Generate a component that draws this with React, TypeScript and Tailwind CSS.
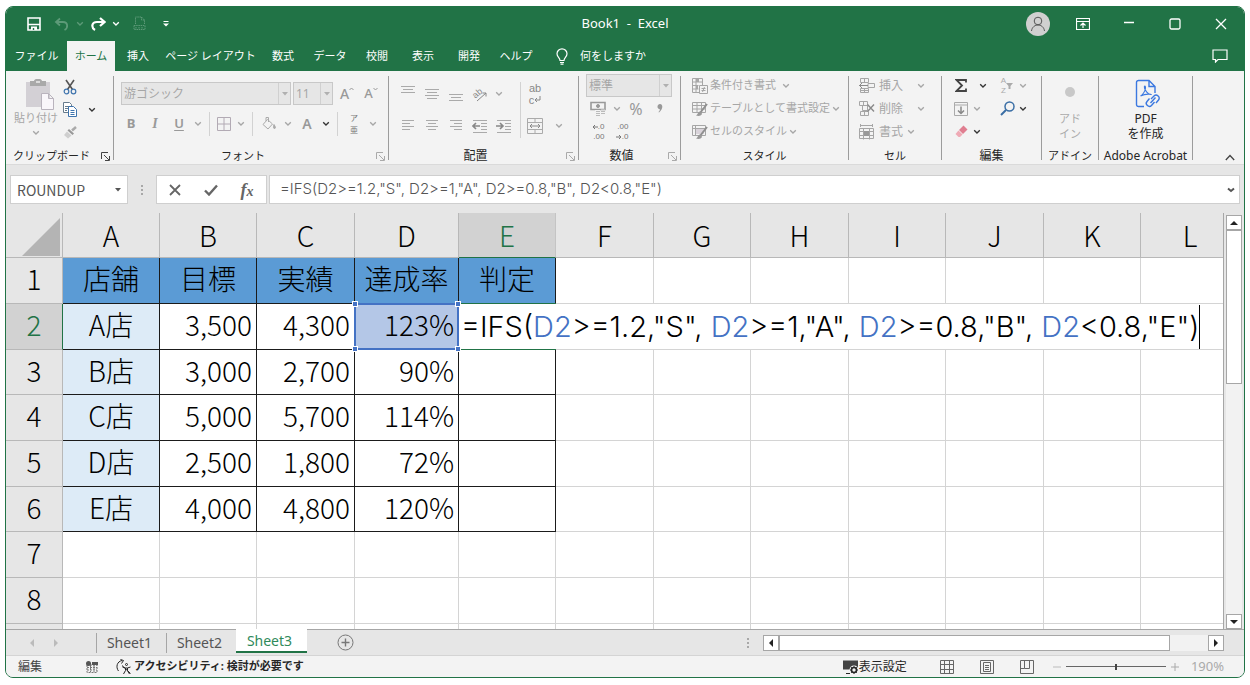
import type { ReactNode } from 'react';
import clsx from 'clsx';

const tabs = [
  { label: 'ファイル', width: 'w-[61px]' },
  { label: 'ホーム', width: 'w-12', active: true },
  { label: '挿入', width: 'w-[46px]' },
  { label: 'ページ レイアウト', width: 'w-[99px]' },
  { label: '数式', width: 'w-[46px]' },
  { label: 'データ', width: 'w-12' },
  { label: '校閲', width: 'w-[46px]' },
  { label: '表示', width: 'w-[46px]' },
  { label: '開発', width: 'w-[46px]' },
  { label: 'ヘルプ', width: 'w-12' },
];

const columns = [
  { name: 'A', width: 'w-[97px]' },
  { name: 'B', width: 'w-[97px]' },
  { name: 'C', width: 'w-[98px]' },
  { name: 'D', width: 'w-[104px]' },
  { name: 'E', width: 'w-[97px]' },
  { name: 'F', width: 'w-[98px]' },
  { name: 'G', width: 'w-[97px]' },
  { name: 'H', width: 'w-[98px]' },
  { name: 'I', width: 'w-[97px]' },
  { name: 'J', width: 'w-[98px]' },
  { name: 'K', width: 'w-[97px]' },
  { name: 'L', width: '' },
];

const headings = ['店舗', '目標', '実績', '達成率', '判定'];

const stores = [
  ['A店', '3,500', '4,300', '123%'],
  ['B店', '3,000', '2,700', '90%'],
  ['C店', '5,000', '5,700', '114%'],
  ['D店', '2,500', '1,800', '72%'],
  ['E店', '4,000', '4,800', '120%'],
];

const formula = '=IFS(D2>=1.2,"S", D2>=1,"A", D2>=0.8,"B", D2<0.8,"E")';

function Icon({
  w = 16,
  h = 16,
  className,
  children,
}: {
  w?: number;
  h?: number;
  className?: string;
  children: ReactNode;
}) {
  return (
    <svg
      width={w}
      height={h}
      viewBox={`0 0 ${w} ${h}`}
      fill="none"
      stroke="currentColor"
      className={clsx('shrink-0', className)}
      aria-hidden="true"
    >
      {children}
    </svg>
  );
}

function Chevron({ className = 'text-[#a6a6a6]' }: { className?: string }) {
  return (
    <Icon w={8} h={6} className={className}>
      <path d="M1.2 1.2 4 4l2.8-2.8" strokeWidth="1.3" />
    </Icon>
  );
}

function Triangle({ dir, className }: { dir: 'up' | 'down' | 'left' | 'right'; className?: string }) {
  const paths = {
    up: 'M0 6 4 2l4 4z',
    down: 'M0 2h8L4 6z',
    left: 'M6 0 2 4l4 4z',
    right: 'M2 0l4 4-4 4z',
  };
  return (
    <Icon w={8} h={8} className={className}>
      <path d={paths[dir]} fill="currentColor" stroke="none" />
    </Icon>
  );
}

function Tool({ label, className, children }: { label: string; className?: string; children: ReactNode }) {
  return (
    <button type="button" aria-label={label} className={clsx('flex shrink-0 items-center justify-center', className)}>
      {children}
    </button>
  );
}

function Drop({ label, dark, className = 'w-3.5' }: { label: string; dark?: boolean; className?: string }) {
  return (
    <Tool label={label} className={className}>
      <Chevron className={dark ? 'text-[#333]' : 'text-[#a6a6a6]'} />
    </Tool>
  );
}

function Rule() {
  return <span className="mx-1 h-6 w-px shrink-0 bg-[#d2d2d2]" />;
}

function Group({
  title,
  titleSize = 'text-[11px]',
  width,
  launcher,
  children,
}: {
  title: string;
  titleSize?: string;
  width: string;
  launcher?: 'dark' | 'light';
  children: ReactNode;
}) {
  return (
    <>
      <section className={clsx('flex shrink-0 flex-col', width)}>
        <div className="h-[77px]">{children}</div>
        <div className="flex h-4 items-center text-[#262626]">
          <span className={clsx('flex-1 text-center leading-4 whitespace-nowrap', titleSize)}>{title}</span>
          {launcher && (
            <Tool label={`${title}の設定`} className="w-4">
              <Icon w={9} h={9} className={launcher === 'dark' ? 'text-[#444]' : 'text-[#aaa]'}>
                <path d="M.5 7V.5H7M3 3l5 5M8.500 4v4.500H4" />
              </Icon>
            </Tool>
          )}
        </div>
      </section>
      <span className="mt-[5px] mb-1 w-px shrink-0 bg-[#9c9c9c]" />
    </>
  );
}

function Lines({ rows }: { rows: [number, number][] }) {
  return (
    <Icon>
      {rows.map(([x, width], i) => (
        <path key={i} d={`M${x} ${2.5 + i * 3}h${width}`} />
      ))}
    </Icon>
  );
}

function Combo({ label, value, className }: { label: string; value: string; className: string }) {
  return (
    <div className={clsx('flex h-[23px] shrink-0 border border-[#c8c8c8] bg-[#e6e6e6]', className)}>
      <select
        aria-label={label}
        disabled
        className="min-w-0 flex-1 appearance-none pl-0.5 text-xs text-[#a6a6a6] opacity-100"
      >
        <option>{value}</option>
      </select>
      <span className="flex w-3 items-center justify-center border-l border-[#d0d0d0] text-[#b0b0b0]">
        <Icon w={6} h={4}>
          <path d="M0 0h6L3 3.500z" fill="currentColor" stroke="none" />
        </Icon>
      </span>
    </div>
  );
}

function TitleBar() {
  return (
    <div className="flex h-[35px] items-center">
      <div className="flex flex-1 items-center">
        <Tool label="上書き保存" className="ml-4 w-6">
          <Icon w={14} h={14}>
            <path d="M1 1h12v12H1z" strokeWidth="1.6" />
            <path d="M1 7.500h12" strokeWidth="1.6" />
            <path d="M4 9.500h6V13H4z" fill="currentColor" stroke="none" />
            <path d="M6.500 11v2" stroke="#217346" strokeWidth="1.4" />
          </Icon>
        </Tool>
        <Tool label="元に戻す" className="ml-1 w-6 text-[#5d9a78]">
          <Icon w={16} h={14}>
            <path d="M6 1.500 2 5l4 3.500M2.500 5H9c5 0 5.500 6 1.500 8" strokeWidth="1.8" />
          </Icon>
        </Tool>
        <Tool label="元に戻す履歴" className="w-3 text-[#5d9a78]">
          <Chevron className="" />
        </Tool>
        <Tool label="やり直し" className="w-6">
          <Icon w={16} h={14}>
            <path d="m10 1 4.500 4L10 9M14 5H7C1.500 5 1 10.500 5 13" strokeWidth="2.2" />
          </Icon>
        </Tool>
        <Tool label="やり直し履歴" className="w-3">
          <Chevron className="" />
        </Tool>
        <Tool label="PDF" className="ml-1 w-7 text-[#5d9a78]">
          <Icon w={14} h={16}>
            <path d="M2.500 8V1h6l3 3v4M8.500 1v3h3M1 9.500h11v4H1zM3 11v1.500M6 11v1.500M9 11v1.500" strokeDasharray="1.500 .7" />
          </Icon>
        </Tool>
        <Tool label="クイック アクセスのカスタマイズ" className="w-6">
          <Icon w={6} h={6}>
            <path d="M.5.500h5" />
            <path d="M0 2.500h6L3 5.500z" fill="currentColor" stroke="none" />
          </Icon>
        </Tool>
      </div>
      <h1 className="text-[13px] whitespace-pre">Book1  -  Excel</h1>
      <div className="flex flex-1 items-center justify-end">
        <Tool label="アカウント" className="mr-2.5 size-6 rounded-full bg-[#d0d0d0] text-[#555]">
          <Icon w={18} h={18}>
            <circle cx="9" cy="6" r="3.800" />
            <path d="M2.500 16c.5-4 3.500-6 6.500-6s6 2 6.500 6" />
          </Icon>
        </Tool>
        <Tool label="リボンの表示オプション" className="w-[46px]">
          <Icon w={14} h={12}>
            <path d="M.5.500h13v11H.5zM.5 3.500h13M7 10V5.500M4.500 7.500 7 5l2.500 2.500" strokeWidth="1.2" />
          </Icon>
        </Tool>
        <Tool label="最小化" className="w-[46px]">
          <Icon w={12} h={12}>
            <path d="M1 4.500h10" strokeWidth="1.3" />
          </Icon>
        </Tool>
        <Tool label="最大化" className="w-[46px]">
          <Icon w={12} h={12}>
            <rect x="1" y="1" width="10" height="10" rx="1.500" strokeWidth="1.3" />
          </Icon>
        </Tool>
        <Tool label="閉じる" className="w-[46px]">
          <Icon w={12} h={12}>
            <path d="m1 1 10 10M11 1 1 11" strokeWidth="1.3" />
          </Icon>
        </Tool>
      </div>
    </div>
  );
}

function TabBar() {
  return (
    <nav className="flex h-[30px] text-[11px]">
      {tabs.map((tab) => (
        <button
          key={tab.label}
          type="button"
          className={clsx(
            'shrink-0 whitespace-nowrap',
            tab.width,
            tab.active && 'bg-[#f3f3f3] text-[#217346]',
          )}
        >
          {tab.label}
        </button>
      ))}
      <button type="button" className="ml-4 flex items-center gap-3 whitespace-nowrap">
        <Icon w={12} h={17}>
          <path d="M4 12.500C4 9.500 1 9 1 5.800a5 5 0 0 1 10 0C11 9 8 9.500 8 12.500zM4 14.500h4M4.500 16.200h3" strokeWidth="1.2" />
        </Icon>
        何をしますか
      </button>
      <Tool label="コメント" className="mr-4 ml-auto">
        <Icon w={16} h={14}>
          <path d="M1 1h14v9.500H6L3.500 13v-2.500H1z" strokeWidth="1.2" />
        </Icon>
      </Tool>
    </nav>
  );
}

function ClipboardGroup() {
  return (
    <Group title="クリップボード" width="w-[107px]" launcher="dark">
      <div className="flex">
        <button type="button" className="mt-2 ml-1.5 flex w-12 flex-col items-center text-[11px] leading-4 text-[#a6a6a6]">
          <Icon w={28} h={31} className="ml-2">
            <path d="M0 3h24v25H0z" fill="#d3d0d5" stroke="none" />
            <path d="M4 2h4c.5-3 7.500-3 8 0h4v5H4z" fill="#a9a9a9" stroke="none" />
            <path d="M10 3h4" stroke="#eee" strokeWidth="1.5" />
            <path d="M15.500 14.500h7l5 5v11h-12zM22.500 14.500v5h5" fill="#f9f6fa" stroke="#b9b3bd" />
          </Icon>
          <span className="whitespace-nowrap">貼り付け</span>
          <span className="mt-1">
            <Chevron />
          </span>
        </button>
        <div className="mt-1 flex flex-col">
          <Tool label="切り取り" className="h-[23px] w-5">
            <Icon w={14} h={16}>
              <path d="M3 1l6.500 9.500M11 1 4.500 10.500" stroke="#555" strokeWidth="1.6" />
              <circle cx="3.500" cy="12.500" r="2.300" stroke="#3f74ad" strokeWidth="1.2" />
              <circle cx="10.500" cy="12.500" r="2.300" stroke="#3f74ad" strokeWidth="1.2" />
            </Icon>
          </Tool>
          <div className="flex">
            <Tool label="コピー" className="h-[23px] w-5">
              <Icon w={14} h={15} className="text-[#667b8c]">
                <path d="M.5.500h6l2 2v8h-8zM2 4.500h4M2 6.500h4M2 8.500h2" fill="#fff" />
                <path d="M5.500 4.500h5l3 3v7h-8zM7.500 8.500h4M7.500 10.500h4M7.500 12.500h4" fill="#fff" stroke="#3f74ad" />
              </Icon>
            </Tool>
            <Drop label="コピーのオプション" dark className="w-6" />
          </div>
          <Tool label="書式のコピー" className="h-[23px] w-5">
            <Icon w={14} h={13} className="text-[#aaa]">
              <path d="m13 1-4 3.500" strokeWidth="2.500" />
              <path d="m6 3 5 4.500-1.500 1.500L4.500 4.500z" fill="#999" stroke="none" />
              <path d="M4 5.500 8.500 9.500 5 12.500 1 9z" fill="#cfcfcf" stroke="none" />
            </Icon>
          </Tool>
        </div>
      </div>
    </Group>
  );
}

function FontGroup() {
  return (
    <Group title="フォント" width="w-[274px]" launcher="light">
      <div className="flex items-center gap-0.5 pt-[11px] pl-[7px]">
        <Combo label="フォント" value="游ゴシック" className="w-[170px]" />
        <Combo label="フォント サイズ" value="11" className="w-10" />
        <Tool label="フォント サイズの拡大" className="w-6 text-sm font-medium text-[#999]">
          A
          <Icon w={5} h={14}>
            <path d="M.5 3 2.500 1l2 2" />
          </Icon>
        </Tool>
        <Tool label="フォント サイズの縮小" className="w-5 text-[13px] font-medium text-[#999]">
          A
          <Icon w={5} h={14}>
            <path d="m.5 1 2 2 2-2" />
          </Icon>
        </Tool>
      </div>
      <div className="flex h-[38px] items-center pl-[5px] text-[13px] text-[#999]">
        <Tool label="太字" className="w-6">
          <b>B</b>
        </Tool>
        <Tool label="斜体" className="w-6 text-sm">
          <i className="font-['Liberation_Serif',serif] font-bold">I</i>
        </Tool>
        <Tool label="下線" className="w-6">
          <u className="font-semibold underline-offset-2">U</u>
        </Tool>
        <Drop label="下線の種類" />
        <Rule />
        <Tool label="罫線" className="w-5">
          <Icon w={14} h={14} className="text-[#b2aab4]">
            <path d="M.5.500h13v13H.5zM7 .5v13M.5 7h13" />
          </Icon>
        </Tool>
        <Drop label="罫線の種類" />
        <Rule />
        <Tool label="塗りつぶしの色" className="w-6">
          <Icon w={14} h={14} className="text-[#aaa]">
            <path d="M5.500 2.500 10.500 7 6 12 1 7.500zM4 4V.500h2.500V5" />
            <path d="M12 7.500c2 3 1.500 4 .5 4s-1.500-1-.5-4z" fill="currentColor" />
          </Icon>
        </Tool>
        <Drop label="塗りつぶしの色の選択" />
        <Tool label="フォントの色" className="w-6 text-sm font-semibold">
          A
        </Tool>
        <Drop label="フォントの色の選択" dark />
        <Rule />
        <Tool label="ふりがな" className="w-6">
          <span className="flex flex-col items-center font-['Noto_Sans_CJK_JP',sans-serif] text-[8px] leading-3 text-[#777]">
            <span>ア</span>
            <span>亜</span>
          </span>
        </Tool>
        <Drop label="ふりがなの設定" />
      </div>
    </Group>
  );
}

function AlignmentGroup() {
  return (
    <Group title="配置" titleSize="text-xs" width="w-[189px]" launcher="light">
      <div className="flex pt-[11px] pl-[7px] text-[#aaa]">
        <div>
          <div className="flex h-6 items-center">
            <Tool label="上揃え" className="h-6 w-6">
              <Icon w={16} h={24}>
                <path d="M1 4.500h14M3 7.500h10M1 10.500h14" />
              </Icon>
            </Tool>
            <Tool label="上下中央揃え" className="h-6 w-6">
              <Icon w={16} h={24}>
                <path d="M1 7.500h14M3 10.500h10M1 13.500h14M3 16.500h10" />
              </Icon>
            </Tool>
            <Tool label="下揃え" className="h-6 w-6">
              <Icon w={16} h={24}>
                <path d="M1 12.500h14M3 15.500h10M1 18.500h14" />
              </Icon>
            </Tool>
            <Tool label="方向" className="w-6">
              <Icon w={18} h={18}>
                <text
                  x="3"
                  y="12"
                  transform="rotate(-40 6 11)"
                  fontFamily="Liberation Sans"
                  fontSize="9"
                  fill="#888"
                  stroke="none"
                >
                  ab
                </text>
                <path d="m6 16 9-8M11.500 8H15v3.500" stroke="#888" />
              </Icon>
            </Tool>
            <Drop label="方向の選択" />
          </div>
          <div className="mt-2 flex h-6 items-center">
            <Tool label="左揃え" className="w-6">
              <Lines rows={[[2, 12], [2, 8], [2, 12], [2, 8]]} />
            </Tool>
            <Tool label="中央揃え" className="w-6">
              <Lines rows={[[2, 12], [4, 8], [2, 12], [4, 8]]} />
            </Tool>
            <Tool label="右揃え" className="w-6">
              <Lines rows={[[2, 12], [6, 8], [2, 12], [6, 8]]} />
            </Tool>
            <Tool label="インデントを減らす" className="w-6">
              <Icon>
                <path d="M1 2.500h14M9 5.500h6M9 8.500h6M9 11.500h6M1 14.500h14" />
                <path d="M1 8h7M4 5 1 8l3 3" stroke="#888" strokeWidth="1.6" />
              </Icon>
            </Tool>
            <Tool label="インデントを増やす" className="w-6">
              <Icon>
                <path d="M1 2.500h14M9 5.500h6M9 8.500h6M9 11.500h6M1 14.500h14" />
                <path d="M0 8h7M4 5l3 3-3 3" stroke="#888" strokeWidth="1.6" />
              </Icon>
            </Tool>
          </div>
        </div>
        <span className="mr-0.5 ml-1 h-14 w-px bg-[#d2d2d2]" />
        <div>
          <Tool label="折り返して全体を表示する" className="h-6 w-6">
            <span className="flex flex-col font-['Liberation_Sans',sans-serif] text-[11px] leading-3 text-[#888]">
              <span>ab</span>
              <span className="flex items-center">
                c
                <Icon w={7} h={8}>
                  <path d="M6 0v4H1M3 2 1 4l2 2" />
                </Icon>
              </span>
            </span>
          </Tool>
          <div className="mt-2 flex h-6 items-center">
            <Tool label="セルを結合して中央揃え" className="w-6">
              <Icon>
                <path d="M.5.500h15v15H.5zM.5 4.500h15M.5 11.500h15M8 .5v4M8 11.500v4" />
                <path d="M3 8h10M5 6 3 8l2 2M11 6l2 2-2 2" stroke="#888" />
              </Icon>
            </Tool>
            <Drop label="セル結合の選択" className="w-6" />
          </div>
        </div>
      </div>
    </Group>
  );
}

function NumberGroup() {
  return (
    <Group title="数値" titleSize="text-xs" width="w-[101px]" launcher="light">
      <div className="flex pt-[3px] pl-[7px]">
        <Combo label="表示形式" value="標準" className="w-[86px]" />
      </div>
      <div className="flex h-[23px] items-center pl-[7px] text-[#999]">
        <Tool label="通貨表示形式" className="w-6">
          <Icon>
            <path d="M1 1.500h14v7H1z" strokeWidth="1.6" />
            <circle cx="8" cy="5" r="1.500" fill="currentColor" />
            <path d="M5 9h5v6H5z" fill="#f3f3f3" stroke="none" />
            <path d="M6 10.500h4M6 12.500h4M6 14.500h4M11 8.500h4M11 10.500h4M11 12.500h4" stroke="#bbb" />
          </Icon>
        </Tool>
        <Drop label="通貨の選択" />
        <Tool label="パーセント スタイル" className="w-6 text-base">
          %
        </Tool>
        <Tool label="桁区切りスタイル" className="w-6">
          <Icon w={6} h={9}>
            <path d="M3 0c3 0 3.500 5-1 8.500L1.500 8C3 6.500 3 5.500 2.500 5-.5 5 0 0 3 0z" fill="currentColor" stroke="none" />
          </Icon>
        </Tool>
      </div>
      <div className="flex h-6 items-center pl-[7px] font-['Liberation_Sans',sans-serif] text-[8px] leading-[10px] text-[#777]">
        <Tool label="小数点以下の表示桁数を増やす" className="w-6">
          <span className="flex flex-col items-end">
            <span className="flex items-center">
              <Icon w={6} h={6}>
                <path d="M6 3H1M3 1 1 3l2 2" />
              </Icon>
              .0
            </span>
            <span>.00</span>
          </span>
        </Tool>
        <Tool label="小数点以下の表示桁数を減らす" className="w-6">
          <span className="flex flex-col items-end">
            <span>.00</span>
            <span className="flex items-center">
              <Icon w={6} h={6}>
                <path d="M0 3h5M3 1l2 2-2 2" />
              </Icon>
              .0
            </span>
          </span>
        </Tool>
      </div>
    </Group>
  );
}

function StyleGroup() {
  const row = 'flex h-[23px] items-center gap-0.5 whitespace-nowrap';
  return (
    <Group title="スタイル" width="w-[167px]">
      <div className="flex flex-col items-start pt-[3px] pl-[11px] text-[11px] text-[#a6a6a6]">
        <button type="button" className={row}>
          <Icon>
            <path d="M.5.500h10v14H.5zM.5 4h10M.5 7.500h6M.5 11h6M4 .5v14" />
            <path d="M4 1h3v3H4zM4 8h2v3H4z" fill="currentColor" stroke="none" />
            <path d="M7.500 7.500h8v8h-8zM9.500 10.500h4M9.500 12.500h4M12.500 9l-2 5" fill="#f3f3f3" />
          </Icon>
          条件付き書式
          <Chevron className="ml-1" />
        </button>
        <button type="button" className={row}>
          <Icon>
            <path d="M.5 1.500h13v10H.5zM.5 4.500h13M.5 8h13M5 1.500v10M9.500 1.500v10" />
            <path d="m15 3-7 9" strokeWidth="2" stroke="#8f8f8f" />
            <path d="M8 10.500c-2 0-2 3-4 4 3 1 6 0 6-2z" fill="#999" stroke="none" />
          </Icon>
          テーブルとして書式設定
          <Chevron />
        </button>
        <button type="button" className={row}>
          <Icon>
            <path d="M3 4h9v6H3z" fill="#d9d3da" stroke="none" />
            <path d="M.5 1.500h13v10H.5zM.5 4.500h13M3.500 1.500v10" />
            <path d="m15 3-7 9" strokeWidth="2" stroke="#8f8f8f" />
            <path d="M8 10.500c-2 0-2 3-4 4 3 1 6 0 6-2z" fill="#999" stroke="none" />
          </Icon>
          セルのスタイル
          <Chevron />
        </button>
      </div>
    </Group>
  );
}

function CellGroup() {
  const row = 'flex h-[23px] items-center gap-1 whitespace-nowrap';
  return (
    <Group title="セル" width="w-[92px]">
      <div className="flex flex-col items-start pt-[3px] pl-2.5 text-xs text-[#a6a6a6]">
        <button type="button" className={row}>
          <Icon>
            <path d="M1.500.500h8v4h-8zM5.500.500v4M1.500 10.500h8v4h-8zM5.500 10.500v4M1.500 12.500h8M9 5.500h6.500v4H9z" />
            <path d="M0 7.500h9M3 5 .5 7.500 3 10" stroke="#8a8a8a" />
          </Icon>
          挿入
          <Chevron className="ml-2.5" />
        </button>
        <button type="button" className={row}>
          <Icon>
            <path d="M.5.500h8v4h-8zM4.500.500v4M3.500 4.500h5v5h-5zM1.500 10.500h8v4h-8zM5.500 10.500v4" />
            <path d="m8.500 3.500 6.500 7M15 3.500l-6.500 7" stroke="#8a8a8a" strokeWidth="1.4" />
          </Icon>
          削除
          <Chevron className="ml-2.5" />
        </button>
        <button type="button" className={row}>
          <Icon>
            <path d="M1 1.500h13M1.500 0v3M13.500 0v3M.5 4.500h14v10H.5zM.5 7.500h14M.5 11.500h14M4.500 4.500v11M10.500 4.500v11" />
            <path d="M5 7h5v5H5z" fill="#999" stroke="none" />
          </Icon>
          書式
          <Chevron />
        </button>
      </div>
    </Group>
  );
}

function EditGroup() {
  return (
    <Group title="編集" titleSize="text-xs" width="w-[99px]">
      <div className="flex flex-col pt-[3px] pl-[7px]">
        <div className="flex h-[23px] items-center">
          <Tool label="オート SUM" className="w-6">
            <Icon w={12} h={13} className="text-[#444]">
              <path d="M11 3.500V1H1.500L7 6.500 1.500 12H11V9.500" strokeWidth="1.8" />
            </Icon>
          </Tool>
          <Drop label="オート SUM の選択" dark className="w-5" />
          <Tool label="並べ替えとフィルター" className="ml-0.5 w-6 text-[#aaa]">
            <span className="flex flex-col font-['Liberation_Sans',sans-serif] text-[8px] leading-[10px]">
              <span>A</span>
              <span>Z</span>
            </span>
            <Icon w={7} h={8}>
              <path d="M0 1h7L4.500 4v3h-2V4z" fill="currentColor" stroke="none" />
            </Icon>
          </Tool>
          <Drop label="並べ替えの選択" className="w-2" />
        </div>
        <div className="flex h-[23px] items-center">
          <Tool label="フィル" className="w-6">
            <Icon w={14} h={14} className="text-[#aaa]">
              <path d="M.5.500h13v13H.5zM.5 3h13" />
              <path d="M7 4.500V11M4 8.500l3 3 3-3" stroke="#888" strokeWidth="1.5" />
            </Icon>
          </Tool>
          <Drop label="フィルの選択" className="w-2" />
          <Tool label="検索と選択" className="ml-3.5 w-6">
            <Icon w={15} h={15} className="text-[#3a6ea5]">
              <circle cx="9.500" cy="5.500" r="4.500" strokeWidth="1.5" />
              <path d="M6 9 1 14" strokeWidth="2" />
            </Icon>
          </Tool>
          <Drop label="検索の選択" dark className="w-2" />
        </div>
        <div className="flex h-[23px] items-center">
          <Tool label="クリア" className="w-6">
            <Icon w={13} h={13}>
              <path d="m8.500.500 4 4L8 9 4 5z" fill="#e07e90" stroke="none" />
              <path d="M3.500 5.500l4 4L5 12H3.500L.5 9z" fill="#efaab5" stroke="none" />
            </Icon>
          </Tool>
          <Drop label="クリアの選択" dark className="w-2" />
        </div>
      </div>
    </Group>
  );
}

function Ribbon() {
  return (
    <div className="flex h-[93px] bg-[#f3f3f3]">
      <ClipboardGroup />
      <FontGroup />
      <AlignmentGroup />
      <NumberGroup />
      <StyleGroup />
      <CellGroup />
      <EditGroup />
      <Group title="アドイン" width="w-14">
        <button type="button" className="flex w-full flex-col items-center pt-4 text-[11px] leading-[15px] text-[#aaa]">
          <span className="mb-3.5 size-2.5 rounded-full bg-[#c8c8c8]" />
          <span>アド</span>
          <span>イン</span>
        </button>
      </Group>
      <Group title="Adobe Acrobat" titleSize="text-xs" width="w-[93px]">
        <button type="button" className="flex w-full flex-col items-center pt-2 text-xs leading-[15px] text-[#262626]">
          <Icon w={26} h={30} className="mb-0.5 ml-1 text-[#3b78e0]">
            <path d="M9 27.500H3.500a2 2 0 0 1-2-2v-22a2 2 0 0 1 2-2H14l6 6V14M14 1.500v6h6" strokeWidth="1.4" />
            <path d="M5.500 17c2-1 5-5 5-8s-1.500-2-1 0 3 6 6 6.500-3-2-10 1.500z" strokeWidth="1.1" />
            <path d="m16 20 3-3c2.500-2.500 7 1 4.500 4l-2.500 3M19.500 23l-3 3.500c-2.500 2.500-7-1-4.500-4l2.500-3M15.500 24l5-5.500" strokeWidth="1.4" />
          </Icon>
          <span>PDF</span>
          <span>を作成</span>
        </button>
      </Group>
      <Tool label="リボンを折りたたむ" className="mr-2 ml-auto h-3.5 w-3 self-end text-[#444]">
        <Icon w={10} h={7}>
          <path d="m.8 6 4.200-4.500L9.200 6" strokeWidth="1.3" />
        </Icon>
      </Tool>
    </div>
  );
}

function Grip() {
  return (
    <span className="flex shrink-0 flex-col gap-0.5">
      <span className="size-0.5 bg-[#a8a8a8]" />
      <span className="size-0.5 bg-[#a8a8a8]" />
      <span className="size-0.5 bg-[#a8a8a8]" />
    </span>
  );
}

function FormulaBar() {
  return (
    <div className="flex h-[49px] items-start border-t border-[#dadada] pt-2.5 pr-1 pl-1 text-[#555]">
      <div className="flex h-[29px] w-[118px] shrink-0 items-center border border-[#cfcfcf] bg-white">
        <input
          aria-label="名前ボックス"
          defaultValue="ROUNDUP"
          className="min-w-0 flex-1 pl-1.5 font-['Noto_Sans_CJK_JP',sans-serif] text-sm outline-none"
        />
        <Tool label="名前の一覧" className="w-[18px]">
          <Icon w={6} h={4}>
            <path d="M0 0h6L3 3.500z" fill="currentColor" stroke="none" />
          </Icon>
        </Tool>
      </div>
      <span className="flex h-[29px] w-7 shrink-0 items-center justify-center">
        <Grip />
      </span>
      <div className="flex h-[29px] w-[111px] shrink-0 items-center border border-[#cfcfcf] bg-white text-[#666]">
        <Tool label="キャンセル" className="w-9">
          <Icon w={12} h={12}>
            <path d="m1 1 10 10M11 1 1 11" strokeWidth="1.8" />
          </Icon>
        </Tool>
        <Tool label="入力" className="w-9">
          <Icon w={14} h={12}>
            <path d="m1 6.500 4 4L13 1.500" strokeWidth="2.400" />
          </Icon>
        </Tool>
        <Tool label="関数の挿入" className="w-9 font-['Liberation_Serif',serif] text-lg font-bold">
          <i>
            f<span className="text-sm">x</span>
          </i>
        </Tool>
      </div>
      <div className="ml-0.5 flex h-[29px] min-w-0 flex-1 items-center border border-[#cfcfcf] bg-white">
        <input
          aria-label="数式バー"
          defaultValue={formula}
          className="min-w-0 flex-1 pl-2.5 font-['Inter',sans-serif] text-[15px] font-light outline-none"
        />
        <Tool label="数式バーの展開" className="w-4">
          <Icon w={8} h={6}>
            <path d="M1 1.500 4 4l3-2.500" strokeWidth="2" />
          </Icon>
        </Tool>
      </div>
    </div>
  );
}

function CellEditor() {
  return (
    <div
      role="textbox"
      aria-label="E2"
      className="flex h-[45px] items-center pl-0.5 font-['Inter',sans-serif] text-[29px] leading-10 whitespace-pre"
    >
      {formula.split(/(D2)/).map((part, i) => (
        <span key={i} className={part === 'D2' ? 'text-[#4472c4]' : undefined}>
          {part}
        </span>
      ))}
      <span className="h-11 w-px bg-black" />
    </div>
  );
}

function Sheet() {
  const line = 'border-r border-b';
  const grid = 'border-[#d4d4d4]';
  return (
    <div className="min-h-0 flex-1 overflow-hidden border-r border-[#a6a6a6]">
      <table className="w-full table-fixed border-separate border-spacing-0 font-['Noto_Sans_CJK_JP',sans-serif] text-[28px] leading-10 font-light text-black">
        <colgroup>
          <col className="w-[57px]" />
          {columns.map((column) => (
            <col key={column.name} className={column.width} />
          ))}
        </colgroup>
        <thead>
          <tr className="h-[45px] bg-[#e6e6e6]">
            <th aria-label="すべて選択" className="border-r border-b border-[#b8b8b8] p-0">
              <Icon w={40} h={38} className="mt-1 ml-auto block">
                <path d="M38 0v38H0z" fill="#b4b4b4" stroke="none" />
              </Icon>
            </th>
            {columns.map(({ name }) => (
              <th
                key={name}
                scope="col"
                className={clsx(
                  'border-r border-b p-0 font-light',
                  name === 'E' ? 'border-r-[#c4c4c4] border-b-[#217346] bg-[#d2d2d2] text-[#217346]' : 'border-[#b8b8b8]',
                  name === 'L' && 'border-r-0 pl-4',
                )}
              >
                {name}
              </th>
            ))}
          </tr>
        </thead>
        <tbody className="bg-white">
          {Array.from({ length: 9 }, (_, i) => i + 1).map((n) => {
            const store = stores[n - 2];
            const inTable = n <= 6;
            return (
              <tr key={n} className={n % 3 === 0 ? 'h-[45px]' : 'h-[46px]'}>
                <th
                  scope="row"
                  className={clsx(
                    'border-r border-b p-0 align-top font-light',
                    n === 2
                      ? 'border-r-[#217346] border-b-[#b8b8b8] bg-[#d2d2d2] text-[#217346]'
                      : 'border-[#b8b8b8] bg-[#e6e6e6]',
                  )}
                >
                  {n < 9 && n}
                </th>
                {columns.map(({ name }, c) => {
                  if (n === 2 && c > 4) return null;
                  if (n === 2 && c === 4) {
                    return (
                      <td key={name} colSpan={8} className={clsx('relative border-b p-0', grid)}>
                        <CellEditor />
                        <span className="pointer-events-none absolute -top-px -bottom-px -left-px w-[98px] border-y border-l border-[#217346]" />
                      </td>
                    );
                  }
                  if (n === 1 && c < 5) {
                    return (
                      <td key={name} className={clsx(line, 'border-[#1b1b1b] bg-[#5b9bd5] p-0 text-center align-top')}>
                        {headings[c]}
                      </td>
                    );
                  }
                  if (inTable && c < 5) {
                    return (
                      <td
                        key={name}
                        className={clsx(
                          line,
                          'relative border-[#1b1b1b] p-0 align-top',
                          c === 0 ? 'bg-[#ddebf7] text-center' : 'pr-1 text-right',
                          n === 2 && c === 3 && 'bg-[#b4c7e7]',
                        )}
                      >
                        {store?.[c]}
                        {n === 2 && c === 3 && (
                          <span className="absolute -top-px -right-px -bottom-px -left-px z-10 border-2 border-[#4472c4]">
                            <span className="absolute -top-1 -left-1 size-1.5 border border-white bg-[#4472c4]" />
                            <span className="absolute -top-1 -right-1 size-1.5 border border-white bg-[#4472c4]" />
                            <span className="absolute -bottom-1 -left-1 size-1.5 border border-white bg-[#4472c4]" />
                            <span className="absolute -right-1 -bottom-1 size-1.5 border border-white bg-[#4472c4]" />
                          </span>
                        )}
                      </td>
                    );
                  }
                  return <td key={name} className={clsx(line, grid, 'p-0', name === 'L' && 'border-r-0')} />;
                })}
              </tr>
            );
          })}
        </tbody>
      </table>
    </div>
  );
}

function VerticalScroll() {
  const box = 'flex h-[15px] shrink-0 items-center justify-center border border-[#a6a6a6] bg-white text-[#222]';
  return (
    <div className="mt-0.5 mr-0.5 ml-0.5 flex w-4 shrink-0 flex-col bg-[#f2f2f2]">
      <button type="button" aria-label="上へスクロール" className={box}>
        <Triangle dir="up" />
      </button>
      <span className="h-[154px] border border-[#a6a6a6] bg-white" />
      <button type="button" aria-label="下へスクロール" className={clsx(box, 'mt-auto')}>
        <Triangle dir="down" />
      </button>
    </div>
  );
}

function SheetBar() {
  const box = 'flex h-4 w-4 shrink-0 items-center justify-center border border-[#a6a6a6] bg-white text-[#222]';
  return (
    <div className="flex h-[26px] shrink-0 items-center border-t border-[#a6a6a6] text-sm text-[#555]">
      <div className="flex w-[90px] shrink-0 items-center text-[#bbb]">
        <Tool label="前のシート" className="ml-3.5 w-6">
          <Triangle dir="left" />
        </Tool>
        <Tool label="次のシート" className="w-6">
          <Triangle dir="right" />
        </Tool>
      </div>
      <button type="button" className="h-5 w-[70px] shrink-0 border-l border-[#a6a6a6] pr-1 leading-5">
        Sheet1
      </button>
      <button type="button" className="h-5 w-[70px] shrink-0 border-l border-[#a6a6a6] pr-1 leading-5">
        Sheet2
      </button>
      <button
        type="button"
        className="-mt-px h-6 w-[71px] shrink-0 self-start border-b-2 border-[#217346] bg-white pt-0.5 pr-1 text-[#2f8a5b]"
      >
        Sheet3
      </button>
      <Tool label="新しいシート" className="ml-7 w-5 text-[#777]">
        <Icon w={17} h={17}>
          <circle cx="8.500" cy="8.500" r="7.500" />
          <path d="M8.500 4.500v8M4.500 8.500h8" strokeWidth="1.4" />
        </Icon>
      </Tool>
      <span className="ml-auto">
        <Grip />
      </span>
      <div className="mr-5 ml-3.5 flex w-[461px] bg-[#f2f2f2]">
        <button type="button" aria-label="左へスクロール" className={box}>
          <Triangle dir="left" />
        </button>
        <span className="w-[391px] border border-[#a6a6a6] bg-white" />
        <button type="button" aria-label="右へスクロール" className={clsx(box, 'ml-auto')}>
          <Triangle dir="right" />
        </button>
      </div>
    </div>
  );
}

function StatusBar() {
  return (
    <footer className="flex h-[22px] shrink-0 items-center border-t border-[#d4d4d4] bg-[#f3f3f3] text-xs text-[#444]">
      <span className="w-[74px] shrink-0 pl-3">編集</span>
      <Tool label="マクロの記録" className="w-6">
        <Icon w={12} h={12} className="text-[#777]">
          <path d="M1 4h10v7.500H1zM1 6.500h10M1 9h10M4.500 4v7M8 4v7" strokeDasharray="2 1" />
          <path d="M6 1h6v3H6z" fill="#555" stroke="none" />
          <circle cx="2.500" cy="2.500" r="2.500" fill="#555" stroke="none" />
        </Icon>
      </Tool>
      <button type="button" className="ml-3 flex items-center gap-0.5 text-[11px] font-bold text-[#262626]">
        <Icon w={16} h={16}>
          <path d="M6 1.500C1 2.500-.5 8 2.500 12M5.500 4.500l2-3-3-1" />
          <circle cx="10.500" cy="5.500" r="1" />
          <path d="M6.500 8l3 1h2l3-1M9.500 9v2.500L7.500 15M11.500 9v2.500l2 3.500M6 6.500l8.500 8" />
        </Icon>
        アクセシビリティ: 検討が必要です
      </button>
      <button type="button" className="ml-auto flex items-center whitespace-nowrap text-[#262626]">
        <Icon w={17} h={16}>
          <path d="M1 1.500h15v9H1z" fill="#444" stroke="none" />
          <path d="M4 14.500h4" />
          <circle cx="12" cy="11" r="4.500" fill="#f3f3f3" stroke="none" />
          <circle cx="12" cy="11" r="2.500" strokeWidth="1.6" />
          <path d="M12 7v1.500M12 13.500V15M8 11h1.500M14.500 11H16M9.200 8.200l1 1M13.800 12.800l1 1M14.800 8.200l-1 1M10.200 12.800l-1 1" />
        </Icon>
        表示設定
      </button>
      <Tool label="標準" className="ml-5 w-10 text-[#666]">
        <Icon w={14} h={14}>
          <path d="M.5.500h13v13H.5zM.5 4.500h13M.5 9.500h13M4.500.500v13M9.500.500v13" />
        </Icon>
      </Tool>
      <Tool label="ページ レイアウト" className="w-10 text-[#666]">
        <Icon w={14} h={14}>
          <path d="M.5.500h13v13H.5zM3.500 2.500h7v9h-7zM5 5.500h4M5 7.500h4M5 9.500h4" />
        </Icon>
      </Tool>
      <Tool label="改ページ プレビュー" className="w-10 text-[#666]">
        <Icon w={14} h={14}>
          <path d="M.5.500h13v13H.5zM4.500.500v8h5v-8M.5 8.500h4" />
        </Icon>
      </Tool>
      <Tool label="縮小" className="ml-0.5 w-4 text-[#bbb]">
        <Icon w={8} h={8}>
          <path d="M0 4h8" />
        </Icon>
      </Tool>
      <input
        type="range"
        aria-label="ズーム"
        min={10}
        max={370}
        defaultValue={190}
        className="mx-px h-px w-[100px] appearance-none bg-[#666] [&::-webkit-slider-thumb]:h-1.5 [&::-webkit-slider-thumb]:w-0.5 [&::-webkit-slider-thumb]:appearance-none [&::-webkit-slider-thumb]:bg-[#444]"
      />
      <Tool label="拡大" className="w-4 text-[#aaa]">
        <Icon w={8} h={8}>
          <path d="M0 4h8M4 0v8" />
        </Icon>
      </Tool>
      <span className="mr-5 ml-2 text-[13px] text-[#aaa]">190%</span>
    </footer>
  );
}

export default function App() {
  return (
    <div className="h-screen bg-white px-[5px] pt-1.5 pb-[7px] font-['Noto_Sans','Noto_Sans_CJK_JP',sans-serif]">
      <div className="flex h-full flex-col overflow-hidden rounded-lg border border-[#217346] bg-[#e6e6e6]">
        <header className="-mt-px shrink-0 bg-[#217346] text-white">
          <TitleBar />
          <TabBar />
        </header>
        <Ribbon />
        <FormulaBar />
        <main className="flex min-h-0 flex-1">
          <Sheet />
          <VerticalScroll />
        </main>
        <SheetBar />
        <StatusBar />
      </div>
    </div>
  );
}
